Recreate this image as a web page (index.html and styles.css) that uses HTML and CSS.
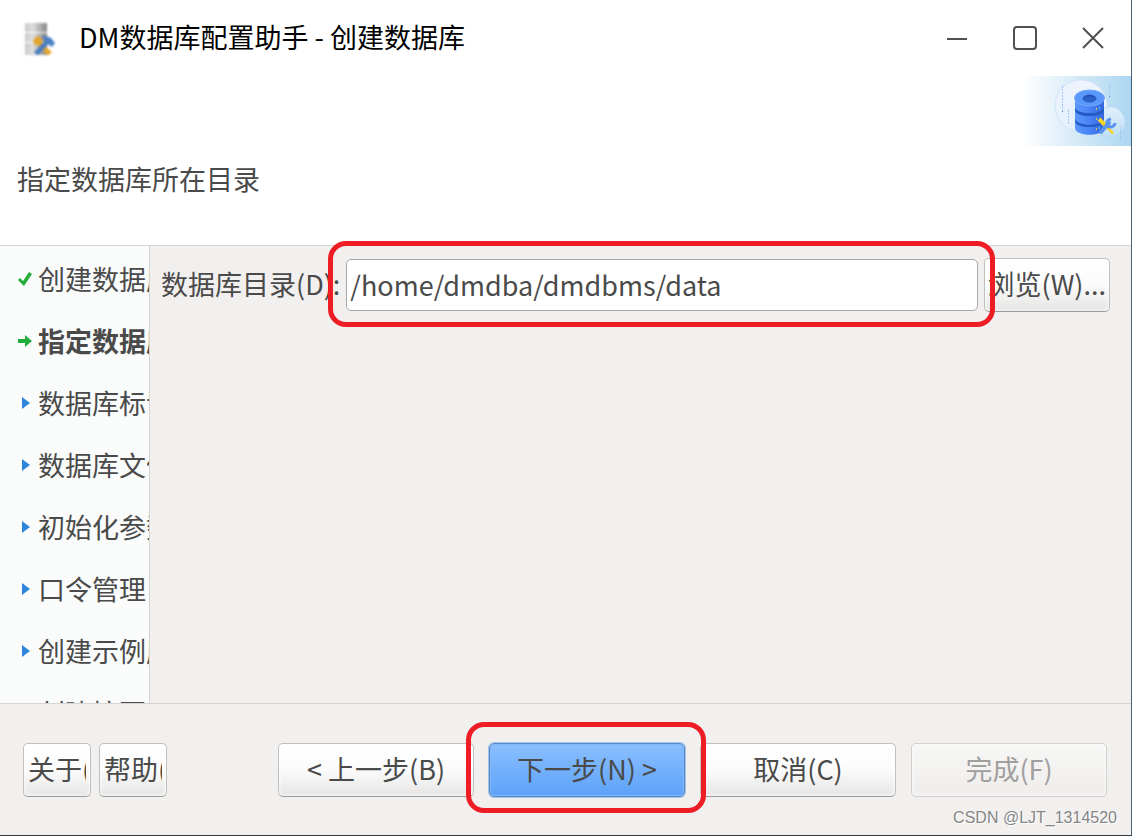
FILE: index.html
```html
<!doctype html>
<html lang="zh-CN">
	<head>
		<meta charset="UTF-8" />
		<meta name="viewport" content="width=device-width, initial-scale=1.0" />
		<title>DM数据库配置助手 - 创建数据库</title>
		<link rel="stylesheet" href="styles.css">
	</head>

	<body>
		<div class="window">
			<header class="titlebar">
				<svg class="app-icon" width="32" height="34" viewBox="0 0 32 34">
					<defs>
						<linearGradient id="disk" x1="0" x2="1">
							<stop offset="0" stop-color="#c9c9c9" />
							<stop offset=".35" stop-color="#dedede" />
							<stop offset="1" stop-color="#858585" />
						</linearGradient>
					</defs>
					<path fill="url(#disk)" d="M1 2h22v9H1zM1 12h22v9H1zM1 22h22v12H1z" />
					<path stroke="#e3a52c" stroke-width="5" d="m12 19 14 14" />
					<path fill="#e3a52c" d="m9 19 5-4 5 4-4 5-5-1z" />
					<path stroke="#4c7fc4" stroke-width="5" d="M12 33 24 20" />
					<path fill="#4c7fc4" d="m17 16 5-1 5 2 4 5-3 4-4-3-2-3z" />
				</svg>
				<span class="title">DM数据库配置助手 - 创建数据库</span>
				<div class="window-controls">
					<button class="control" aria-label="最小化">
						<svg width="26" height="26" viewBox="0 0 26 26"><path d="M3 14h20" /></svg>
					</button>
					<button class="control" aria-label="最大化">
						<svg width="26" height="26" viewBox="0 0 26 26"><rect x="2" y="2" width="22" height="22" rx="3" /></svg>
					</button>
					<button class="control" aria-label="关闭">
						<svg width="26" height="26" viewBox="0 0 26 26"><path d="m3 3 20 20M23 3 3 23" /></svg>
					</button>
				</div>
			</header>

			<section class="banner">
				<h1>指定数据库所在目录</h1>
				<svg class="banner-art" width="108" height="70" viewBox="0 0 108 70">
					<defs>
						<linearGradient id="sky" x1="0" x2="1">
							<stop offset="0" stop-color="#fff" />
							<stop offset=".5" stop-color="#d5eaf7" />
							<stop offset="1" stop-color="#acd6f1" />
						</linearGradient>
						<linearGradient id="bubble" x1="0" y1="0" x2="0" y2="1">
							<stop offset="0" stop-color="#eff4fe" />
							<stop offset="1" stop-color="#e3f0fb" />
						</linearGradient>
						<linearGradient id="bubbleSmall" x1="0" y1="0" x2="0" y2="1">
							<stop offset="0" stop-color="#e0effb" />
							<stop offset="1" stop-color="#bddff5" />
						</linearGradient>
						<linearGradient id="tier" x1="0" x2="1">
							<stop offset="0" stop-color="#5c99fd" />
							<stop offset=".5" stop-color="#4783f5" />
							<stop offset="1" stop-color="#3566dd" />
						</linearGradient>
					</defs>
					<path fill="url(#sky)" d="M0 0h108v70H0z" />
					<g transform="translate(1)">
						<circle cx="57" cy="30" r="26" fill="url(#bubble)" stroke="#c8def7" stroke-dasharray="2 1" />
						<circle cx="86" cy="46" r="15" fill="url(#bubbleSmall)" stroke="#b4d7f4" stroke-dasharray="2 1" />
						<path fill="none" stroke="#9fc6f4" stroke-dasharray="2 1" d="M38.500 10v25M44.500 34v15M85.500 8v12M96.500 51v13" />
						<path fill="#3a80e8" d="M38 35h1v1h-1zM85 20h1v1h-1z" />
						<path fill="url(#tier)" d="M51 42v10c0 9 29 9 29 0V42z" />
						<path fill="#265bc6" d="M51 42v3c0 8 29 8 29 0v-3z" />
						<path fill="url(#tier)" d="M51 32v10c0 9 29 9 29 0V32z" />
						<path fill="#265bc6" d="M51 31v3c0 8 29 8 29 0v-3z" />
						<path fill="url(#tier)" d="M51 21v10c0 8 29 8 29 0V21z" />
						<ellipse cx="65.500" cy="22" rx="15" ry="8" fill="#5a97fb" stroke="#72a6fc" />
						<ellipse cx="65.500" cy="22.500" rx="7" ry="4" fill="#2c61c9" />
						<path fill="#1d4dac" d="M60 22c2-4 9-4 11 0-3-2-8-2-11 0z" />
						<path fill="#d9c94f" d="M72 32h1v2h-1zM72 42h1v2h-1zM72 52h1v2h-1z" />
						<path fill="#40d3ed" d="M75 31h1v2h-1zM75 51h1v2h-1z" />
						<path stroke="#f5d327" stroke-width="4" d="m75 43 7 7" />
						<path stroke="#f5d327" stroke-width="2" d="m80 48 9 9" />
						<path fill="#f5d327" d="m85 51 5 6-2 1-5-5z" />
						<path stroke="#5a92ef" stroke-width="4" stroke-linecap="round" d="m77 56 8-9" />
						<path fill="none" stroke="#5a92ef" stroke-width="3" d="M87 43c-6 1-5 8 0 8 2 0 4-2 4-4" />
					</g>
				</svg>
			</section>

			<main class="workspace">
				<nav class="steps" aria-label="步骤">
					<ol>
						<li>
							<svg class="step-icon" width="14" height="14" viewBox="0 0 14 14"><path fill="#23ad3a" d="m0 8 2-2 3 3 6-9 3 2-8 12z" /></svg>
							创建数据库
						</li>
						<li class="current" aria-current="step">
							<svg class="step-icon" width="14" height="14" viewBox="0 0 14 14"><path fill="#23ad3a" d="M0 5h7V1l7 6-7 6V9H0z" /></svg>
							指定数据库所在目录
						</li>
						<li>
							<svg class="step-icon" width="14" height="14" viewBox="0 0 14 14"><path fill="#2d86dc" d="m4 1 8 6-8 6z" /></svg>
							数据库标识
						</li>
						<li>
							<svg class="step-icon" width="14" height="14" viewBox="0 0 14 14"><path fill="#2d86dc" d="m4 1 8 6-8 6z" /></svg>
							数据库文件
						</li>
						<li>
							<svg class="step-icon" width="14" height="14" viewBox="0 0 14 14"><path fill="#2d86dc" d="m4 1 8 6-8 6z" /></svg>
							初始化参数
						</li>
						<li>
							<svg class="step-icon" width="14" height="14" viewBox="0 0 14 14"><path fill="#2d86dc" d="m4 1 8 6-8 6z" /></svg>
							口令管理
						</li>
						<li>
							<svg class="step-icon" width="14" height="14" viewBox="0 0 14 14"><path fill="#2d86dc" d="m4 1 8 6-8 6z" /></svg>
							创建示例库
						</li>
						<li>
							<svg class="step-icon" width="14" height="14" viewBox="0 0 14 14"><path fill="#2d86dc" d="m4 1 8 6-8 6z" /></svg>
							创建摘要
						</li>
					</ol>
				</nav>
				<form class="directory" id="directoryForm">
					<label for="directory">数据库目录(D):</label>
					<div class="marked marked-field">
						<input id="directory" value="/home/dmdba/dmdbms/data" autocomplete="off" />
					</div>
					<button class="button browse" type="button">浏览(W)...</button>
				</form>
			</main>

			<footer class="actions">
				<div class="group">
					<button class="button small"><span>关于(A)</span></button>
					<button class="button small"><span>帮助(H)</span></button>
				</div>
				<div class="group wizard">
					<button class="button">&lt; 上一步(B)</button>
					<div class="marked marked-next">
						<button class="button primary">下一步(N) &gt;</button>
					</div>
					<button class="button">取消(C)</button>
					<button class="button" disabled>完成(F)</button>
				</div>
			</footer>
			<span class="watermark">CSDN @LJT_1314520</span>
		</div>
	</body>
</html>
```
FILE: styles.css
```css
*,
*::before,
*::after {
	box-sizing: border-box;
	margin: 0;
	padding: 0;
}

body,
button,
input {
	font-family: 'Noto Sans CJK SC', sans-serif;
	font-size: 27px;
	line-height: 40px;
	color: #4a4a4a;
}

.window {
	position: relative;
	display: grid;
	grid-template-rows: auto auto 1fr auto;
	height: 100vh;
	background: #f2f0ef;
	border-right: 1px solid #46617c;
	border-bottom: 1px solid #303842;
	overflow: hidden;
}

/* title bar */

.titlebar {
	display: flex;
	align-items: center;
	height: 76px;
	padding: 0 25px 0 24px;
	background: #fff;
}

.app-icon {
	margin-right: 23px;
	fill: none;
	filter: blur(1px);
}

.title {
	padding-bottom: 2px;
	color: #000;
	white-space: nowrap;
}

.window-controls {
	display: flex;
	gap: 42px;
	margin-left: auto;
}

.control {
	display: flex;
	background: none;
	border: 0;
}

.control svg {
	fill: none;
	stroke: #505050;
	stroke-width: 2;
}

/* banner */

.banner {
	display: flex;
	justify-content: space-between;
	align-items: flex-start;
	height: 170px;
	background: #fff;
	border-bottom: 1px solid #d6d5d4;
}

.banner h1 {
	padding: 83px 0 0 17px;
	font-size: 27px;
	font-weight: 400;
}

/* steps and form */

.workspace {
	display: grid;
	grid-template-columns: 150px 1fr;
	min-height: 0;
}

.steps {
	min-height: 0;
	padding-top: 2px;
	background: #fafcfb;
	border-right: 1px solid #d3d3d2;
	overflow: hidden;
}

.steps ol {
	list-style: none;
}

.steps li {
	display: flex;
	align-items: center;
	gap: 6px;
	height: 62px;
	padding-left: 18px;
	white-space: nowrap;
}

.steps .current {
	font-weight: 700;
}

.step-icon {
	flex: none;
}

.directory {
	display: grid;
	grid-template-columns: auto 1fr auto;
	align-items: center;
	align-content: start;
	gap: 6px;
	padding: 12px 21px 0 11px;
}

.directory label {
	padding-bottom: 2px;
}

.directory input {
	display: block;
	width: 100%;
	height: 52px;
	padding: 0 3px 2px;
	background: #fff;
	border: 1px solid #a9a8a7;
	border-radius: 5px;
}

/* buttons */

.button {
	height: 54px;
	padding-bottom: 2px;
	background: linear-gradient(#fff, #fbfbfb 50%, #e6e5e4);
	border: 1px solid #c2c0be;
	border-bottom-color: #9d9b99;
	border-radius: 5px;
	box-shadow: inset 0 0 4px #fff;
	white-space: nowrap;
}

.button:disabled {
	color: #a09f9e;
	background: linear-gradient(#f7f7f6, #efedec);
	border-color: #d2d0cf;
}

.browse {
	padding: 0 3px 2px;
}

.small {
	width: 68px;
	padding: 0 4px 2px;
}

.small span {
	display: block;
	overflow: hidden;
}

.primary {
	background: linear-gradient(#8abfff, #5da2f8);
	border-color: #5888c1;
	box-shadow: 0 0 0 1px #9fc5ed, inset 0 0 0 1px #82b7fa;
}

.actions {
	display: flex;
	justify-content: space-between;
	padding: 39px 24px 38px 23px;
	border-top: 1px solid #d6d5d4;
}

.group {
	display: flex;
	gap: 8px;
}

.wizard {
	gap: 15px;
}

.wizard .button {
	width: 196px;
}

/* red outlines over the highlighted controls */

.marked {
	position: relative;
}

.marked::after {
	content: '';
	position: absolute;
	z-index: 1;
	border: 5px solid #ee1c24;
	border-radius: 18px;
	pointer-events: none;
}

.marked-field::after {
	inset: -18px -17px -16px -18px;
}

.marked-next::after {
	inset: -21px -21px -16px -23px;
}

.watermark {
	position: absolute;
	right: 14px;
	bottom: 7px;
	font-family: 'Liberation Sans', sans-serif;
	font-size: 16px;
	line-height: 20px;
	color: #858585;
	text-shadow: 1px 1px #fff;
}
```
